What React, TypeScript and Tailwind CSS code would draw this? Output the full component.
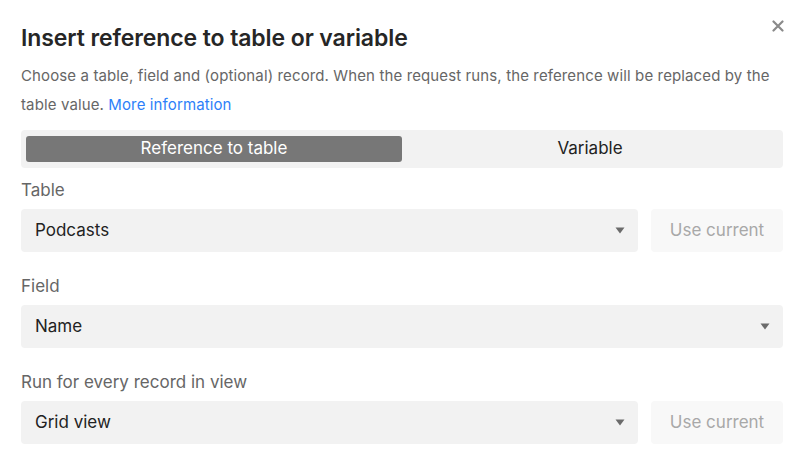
import React from "react";

function Caret() {
  return (
    <svg width="10" height="7" viewBox="0 0 10 7" className="shrink-0">
      <path d="M0.5 0.5 L9.5 0.5 L5 6.5 Z" fill="#6b6b6b" />
    </svg>
  );
}

function Select({ value }: { value: string }) {
  return (
    <div className="flex-1 h-[43px] bg-[#f2f2f2] rounded-[4px] flex items-center justify-between pl-[14px] pr-[13px]">
      <span className="text-[17px] text-[#222]">{value}</span>
      <Caret />
    </div>
  );
}

function UseCurrent() {
  return (
    <div className="w-[132px] h-[43px] bg-[#f8f8f8] rounded-[4px] flex items-center justify-center text-[17px] text-[#a8a8a8]">
      Use current
    </div>
  );
}

export default function App() {
  return (
    <div
      className="w-[800px] h-[465px] bg-white relative overflow-hidden pl-[21px] pr-[17px] pt-[22px]"
      style={{ fontFamily: "Inter, 'Noto Sans', sans-serif" }}
    >
      {/* close button */}
      <div className="absolute right-[14px] top-[18px] w-[16px] h-[16px] flex items-center justify-center">
        <svg width="12" height="12" viewBox="0 0 12 12">
          <path d="M1.5 1.5 L10.5 10.5 M10.5 1.5 L1.5 10.5" stroke="#8a8a8a" strokeWidth="2.2" strokeLinecap="round" />
        </svg>
      </div>

      <h1 className="text-[23px] font-semibold text-[#262626] leading-[32px] tracking-[-0.1px]">
        Insert reference to table or variable
      </h1>
      <p className="mt-[7px] text-[15px] leading-[29px] text-[#666] tracking-[0.12px]">
        <span>
          Choose a table, field and (optional) record. When the request runs, the reference will be replaced by the
          table value.
        </span>{" "}
        <span className="text-[#2d7ff9]">More information</span>
      </p>

      {/* tabs */}
      <div className="mt-[11px] h-[38px] bg-[#f2f2f2] rounded-[4px] flex items-center px-[5px]">
        <div className="flex-1 h-[26px] bg-[#777] rounded-[3px] flex items-center justify-center text-[17px] text-white">
          Reference to table
        </div>
        <div className="flex-1 h-[26px] flex items-center justify-center text-[17px] text-[#222]">
          Variable
        </div>
      </div>

      <div className="mt-[10px] text-[17px] text-[#666] leading-[24px]">Table</div>
      <div className="mt-[7px] flex gap-[13px]">
        <Select value="Podcasts" />
        <UseCurrent />
      </div>

      <div className="mt-[22px] text-[17px] text-[#666] leading-[24px]">Field</div>
      <div className="mt-[7px] flex">
        <Select value="Name" />
      </div>

      <div className="mt-[22px] text-[17px] text-[#666] leading-[24px]">Run for every record in view</div>
      <div className="mt-[7px] flex gap-[13px]">
        <Select value="Grid view" />
        <UseCurrent />
      </div>
    </div>
  );
}
